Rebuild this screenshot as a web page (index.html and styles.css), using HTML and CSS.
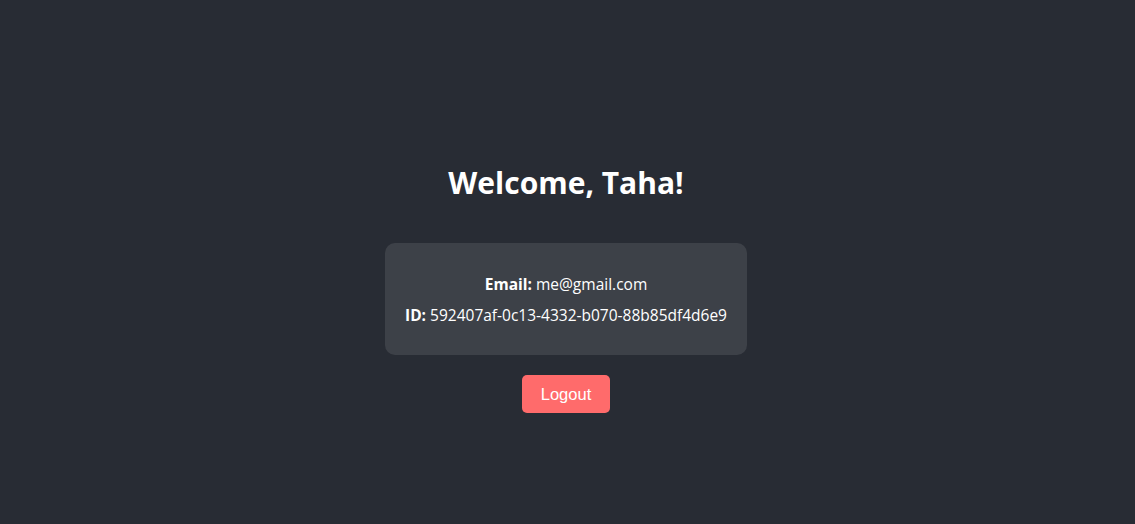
FILE: index.html
```html
<!DOCTYPE html>
<html>
<head>
<meta charset="utf-8">
<link rel="stylesheet" href="styles.css">
</head>
<body>
<main class="page">
  <h1 class="title">Welcome, Taha!</h1>
  <section class="card">
    <p class="row"><strong>Email:</strong> me@gmail.com</p>
    <p class="row"><strong>ID:</strong> 592407af-0c13-4332-b070-88b85df4d6e9</p>
  </section>
  <button class="logout">Logout</button>
</main>
</body>
</html>
```

FILE: styles.css
```css
html, body {
  margin: 0;
  padding: 0;
  background: #282c34;
}
.page {
  box-sizing: border-box;
  height: 524px;
  display: flex;
  flex-direction: column;
  align-items: center;
  padding-top: 161px;
  padding-right: 3px;
  color: #ffffff;
  font-family: "Open Sans", "Noto Sans", sans-serif;
}
.title {
  margin: 0;
  font-size: 30px;
  line-height: 44px;
  font-weight: 700;
}
.card {
  margin-top: 38px;
  width: 362px;
  box-sizing: border-box;
  padding: 21px 0 19px;
  background: rgba(255, 255, 255, 0.1);
  border-radius: 10px;
  text-align: center;
}
.row {
  margin: 10px 0;
  font-size: 15.5px;
  line-height: 21px;
}
.row strong {
  font-weight: 700;
}
.logout {
  margin-top: 20px;
  width: 88px;
  height: 38px;
  border: none;
  border-radius: 5px;
  background: #ff6b6b;
  color: #ffffff;
  font-family: "Liberation Sans", Arial, sans-serif;
  font-size: 16.5px;
  padding: 1px 0 0;
}
```
